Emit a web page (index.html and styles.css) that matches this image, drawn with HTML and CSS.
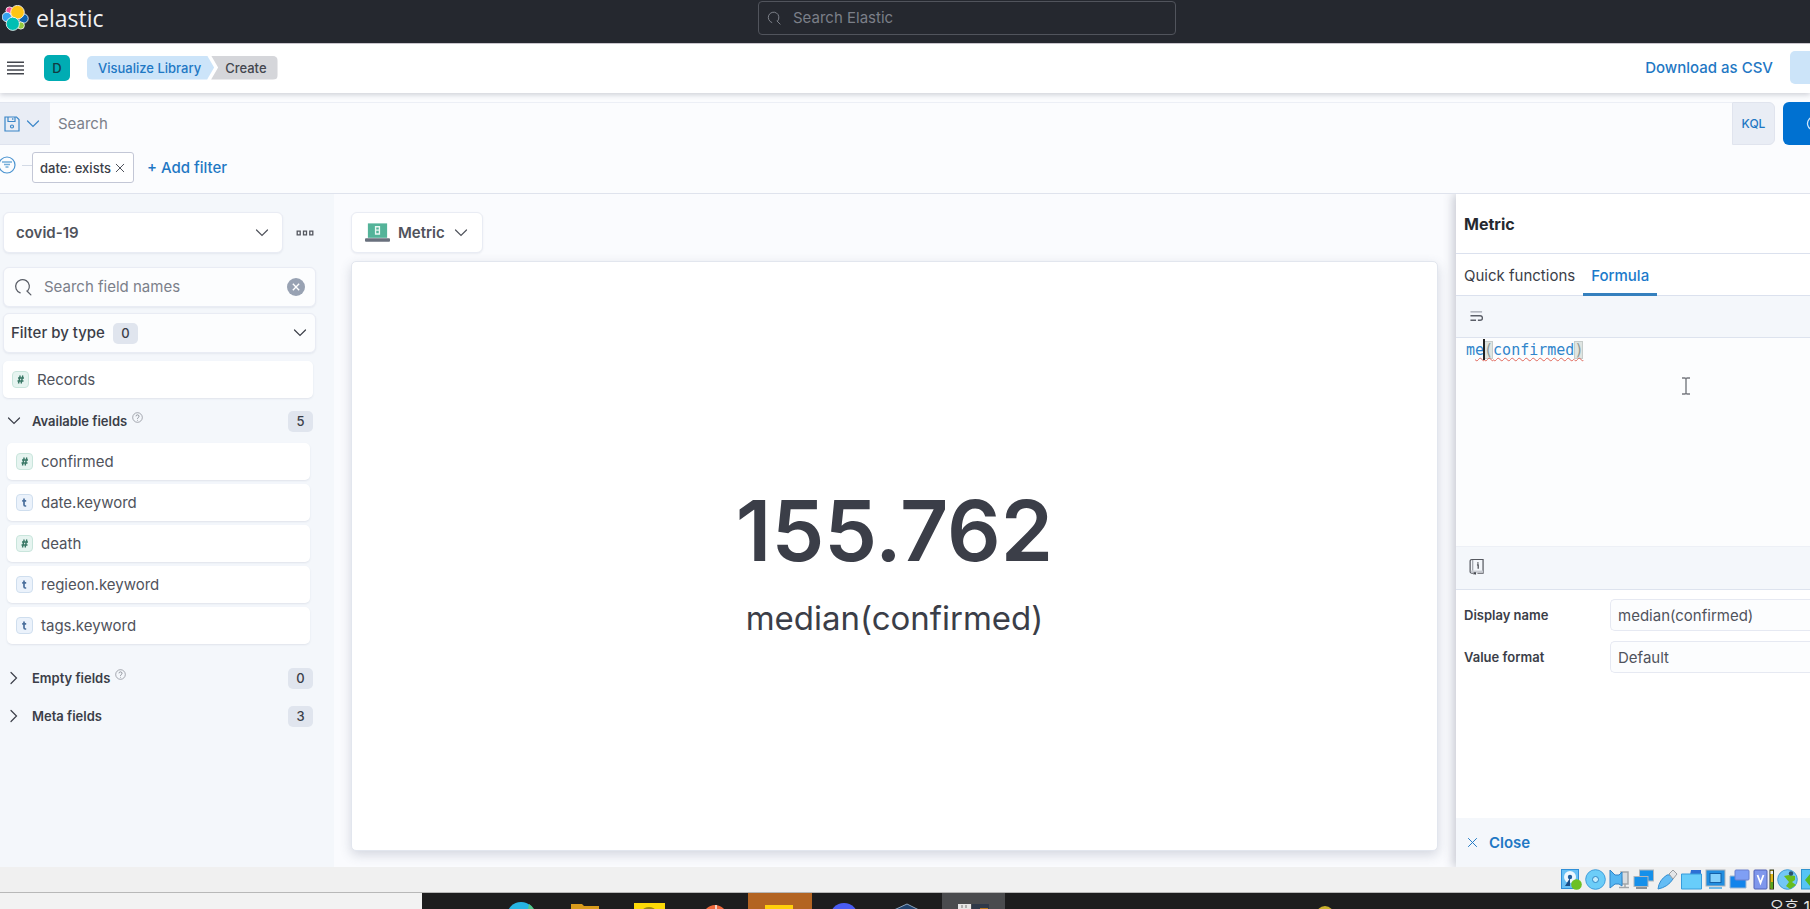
FILE: index.html
```html
<!DOCTYPE html>
<html lang="en">
<head>
<meta charset="utf-8">
<title>Create - Visualize Library - Elastic</title>
<link rel="stylesheet" href="styles.css">
</head>
<body>
<svg width="0" height="0" class="defs" aria-hidden="true">
  <symbol id="chev-down" viewBox="0 0 16 16"><path d="M2.500 5l5.500 5.500L13.500 5" fill="none" stroke="currentColor" stroke-width="1.200" stroke-linecap="round"/></symbol>
  <symbol id="chev-right" viewBox="0 0 16 16"><path d="M5 2.500L10.500 8L5 13.500" fill="none" stroke="currentColor" stroke-width="1.200" stroke-linecap="round"/></symbol>
  <symbol id="search" viewBox="0 0 16 16"><path d="M5.500 13.200A6.100 6.100 0 1 1 12.300 11.300M11.500 11.500L15 15" fill="none" stroke="currentColor" stroke-width="1.100" stroke-linecap="round"/></symbol>
  <symbol id="cross" viewBox="0 0 16 16"><path d="M3 3l10 10M13 3L3 13" fill="none" stroke="currentColor" stroke-width="1.200" stroke-linecap="round"/></symbol>
  <symbol id="help" viewBox="0 0 16 16"><circle cx="8" cy="8" r="7" fill="none" stroke="currentColor"/><path d="M5.800 6.300a2.200 2.200 0 1 1 3.200 2c-.7.400-1 .8-1 1.700M8 11.500v1" fill="none" stroke="currentColor" stroke-width="1.200"/></symbol>
  <symbol id="num" viewBox="0 0 17 17"><rect x=".5" y=".5" width="16" height="16" rx="3.500" fill="#e6f4f0" stroke="#c9e5dc"/><path d="M8.200 4.500L6.500 12.500M10.800 4.500L9.100 12.500M6 7h6M5.500 10h6" stroke="#387765" stroke-width="1.400" fill="none"/></symbol>
  <symbol id="str" viewBox="0 0 17 17"><rect x=".5" y=".5" width="16" height="16" rx="3.500" fill="#ebf2fb" stroke="#cfdeee"/><path d="M8 4.500v6.300q0 1.200 1.200 1.200h1M6.200 6.800h4" stroke="#4a6f9c" stroke-width="1.700" fill="none"/></symbol>
</svg>

<header class="top">
  <a href="#" class="brand">
    <svg class="logo" viewBox="0 0 27 27"><g stroke="#fff" stroke-width=".8"><circle cx="7.500" cy="5.500" r="3.600" fill="#f04e98"/><circle cx="4.800" cy="12" r="4.700" fill="#36a2ef"/><circle cx="21.500" cy="13.500" r="4.700" fill="#0b64b0"/><circle cx="18.800" cy="20.500" r="3.600" fill="#93c83e"/><circle cx="15.500" cy="7.200" r="6.800" fill="#fec514"/><circle cx="10.800" cy="18.800" r="6.600" fill="#00bfb3"/></g></svg>
    <span>elastic</span>
  </a>
  <label class="global-search">
    <svg><use href="#search"/></svg>
    <input type="text" placeholder="Search Elastic" aria-label="Search Elastic">
  </label>
</header>

<nav class="nav">
  <button class="menu" aria-label="Menu"><svg viewBox="0 0 18 14"><path d="M0 1h18M0 5h18M0 9h18M0 13h18" stroke="#43464d" stroke-width="1.600"/></svg></button>
  <button class="space">D</button>
  <div class="crumbs"><a href="#" class="crumb crumb-link">Visualize Library</a><span class="crumb crumb-last">Create</span></div>
  <a href="#" class="download">Download as CSV</a>
  <button class="save" aria-label="Save"></button>
</nav>

<section class="query">
  <div class="query-row">
    <button class="saved" aria-label="Saved queries">
      <svg viewBox="0 0 16 16"><path d="M1 1h11.500L15 3.500V15H1zM4 1v4.500h7V1" fill="none" stroke="currentColor" stroke-width="1.200"/><path d="M8.800 2v2" stroke="currentColor"/><circle cx="8" cy="10.500" r="1.500" fill="none" stroke="currentColor" stroke-width="1.200"/></svg>
      <svg><use href="#chev-down"/></svg>
    </button>
    <input type="text" placeholder="Search" aria-label="Search">
    <button class="kql">KQL</button>
    <button class="refresh" aria-label="Refresh"><svg viewBox="0 0 16 16"><path d="M13.500 4A6.500 6.500 0 1 0 14.500 8" fill="none" stroke="#cfe6fa" stroke-width="1.300"/></svg></button>
  </div>
  <div class="filters">
    <button class="filter-opts" aria-label="Filter options"><svg viewBox="0 0 18 18"><circle cx="9" cy="9" r="8" fill="none" stroke="#4a93d0" stroke-width="1.200"/><path d="M4 6h10M6 8.500h6M7.500 11h3" stroke="#74add9" stroke-width="1.400"/></svg></button>
    <span class="dash"></span>
    <button class="pill">date: exists <svg><use href="#cross"/></svg></button>
    <a href="#" class="add">+ Add filter</a>
  </div>
</section>

<main class="work">
  <aside class="side">
    <div class="source">
      <button class="box dataview">covid-19 <svg><use href="#chev-down"/></svg></button>
      <button class="dots" aria-label="More"><svg viewBox="0 0 18 6"><path d="M1.200 1.200h3v3.600h-3zM7.500 1.200h3v3.600h-3zM13.800 1.200h3v3.600h-3z" fill="none" stroke="#53565e" stroke-width="1.300"/></svg></button>
    </div>
    <label class="box field-search">
      <svg><use href="#search"/></svg>
      <input type="text" placeholder="Search field names" aria-label="Search field names">
      <svg class="clear" viewBox="0 0 17 17"><circle cx="8.500" cy="8.500" r="8.500" fill="#98a2b3"/><path d="M5.500 5.500l6 6M11.500 5.500l-6 6" stroke="#fff" stroke-width="1.300"/></svg>
    </label>
    <button class="box type-filter">Filter by type <span class="badge">0</span><svg><use href="#chev-down"/></svg></button>
    <button class="field records"><svg><use href="#num"/></svg>Records</button>
    <button class="group"><svg><use href="#chev-down"/></svg><span>Available fields</span><svg class="help"><use href="#help"/></svg><span class="badge">5</span></button>
    <div class="fields">
      <button class="field"><svg><use href="#num"/></svg>confirmed</button>
      <button class="field"><svg><use href="#str"/></svg>date.keyword</button>
      <button class="field"><svg><use href="#num"/></svg>death</button>
      <button class="field"><svg><use href="#str"/></svg>regieon.keyword</button>
      <button class="field"><svg><use href="#str"/></svg>tags.keyword</button>
    </div>
    <button class="group"><svg><use href="#chev-right"/></svg><span>Empty fields</span><svg class="help"><use href="#help"/></svg><span class="badge">0</span></button>
    <button class="group"><svg><use href="#chev-right"/></svg><span>Meta fields</span><span class="badge">3</span></button>
  </aside>

  <section class="stage">
    <button class="box chart-type"><svg class="metric-icon" viewBox="0 0 26 20"><rect x="3" y="0" width="20" height="15" fill="#54b399"/><path d="M11 3.500h4v3.500h-4zM11 7h4v4h-4z" fill="none" stroke="#e9f7f2" stroke-width="1.400"/><rect x="0" y="15.500" width="26" height="3.500" rx="1" fill="#69707d"/></svg>Metric<svg><use href="#chev-down"/></svg></button>
    <div class="chart">
      <div class="value">155.762</div>
      <div class="caption">median(confirmed)</div>
    </div>
  </section>

  <aside class="config">
    <h2>Metric</h2>
    <div class="tabs" role="tablist">
      <button role="tab">Quick functions</button>
      <button role="tab" aria-selected="true" class="on">Formula</button>
    </div>
    <div class="tools"><button aria-label="Word wrap"><svg viewBox="0 0 14 12"><path d="M.5 1.500h12.500" stroke="#b4b8c0" stroke-width="1.800"/><path d="M.5 5.800h10.500a2.400 2.400 0 0 1 0 4.800h-2.500M.5 10.600h6" fill="none" stroke="#5b5f68" stroke-width="1.500"/></svg></button></div>
    <div class="editor" role="textbox" aria-label="Formula">m<span class="squiggle">e<i class="caret"></i><span class="paren">(</span>confirmed<span class="paren">)</span></span>
      <svg class="pointer" viewBox="0 0 8 18"><path d="M0 1h3l1 1 1-1h3M4 2v14M0 17h3l1-1 1 1h3" fill="none" stroke="#777a80" stroke-width="1.400"/></svg>
    </div>
    <div class="tools tools-doc"><button aria-label="Reference"><svg viewBox="0 0 16 18"><path d="M3 1h12v14.500H9M5 15.500H3a1.800 1.800 0 0 1-1.800-1.800V2.800A1.800 1.800 0 0 1 3 1" fill="none" stroke="#55585f" stroke-width="1.300"/><path d="M4 1.500v11.500" stroke="#858991"/><path d="M2 12.800h13v2.400H2z" fill="#c9ccd2"/><path d="M5 14.500v3l1.300-1 1.200 1v-3z" fill="#45484f"/><path d="M9.500 4v1.500M8.500 6.800h1.300v4" fill="none" stroke="#45484f" stroke-width="1.300"/></svg></button></div>
    <form class="form">
      <label for="dn">Display name</label><input id="dn" type="text" value="median(confirmed)">
      <label for="vf">Value format</label><input id="vf" type="text" value="Default">
    </form>
    <footer><button class="close"><svg><use href="#cross"/></svg>Close</button></footer>
  </aside>
</main>

<div class="vm-bar">
  <svg viewBox="0 0 21 21"><rect x=".5" y=".5" width="17" height="19" fill="#67c0f5" stroke="#2f8fd8"/><circle cx="9" cy="8" r="6" fill="#eef7fd"/><circle cx="9" cy="8" r="2.200" fill="#1f5e9c"/><path d="M9 9L4 17h5z" fill="#1c4f88"/><circle cx="15.500" cy="15.500" r="5.300" fill="#6cc024"/></svg>
  <svg viewBox="0 0 21 21"><circle cx="10.500" cy="10.500" r="9.800" fill="#6ccdf8" stroke="#3e9ddb"/><circle cx="10.500" cy="10.500" r="3" fill="#c4ecfc" stroke="#2f86c6"/></svg>
  <svg viewBox="0 0 21 21"><path d="M12 3h7v12h-6zM10 18.500h10M16 15v4" fill="#d9dcdf" stroke="#a2a6aa" stroke-width="1.500"/><path d="M1 1l5 5h4l3-3v14l-3-2H6l-5 4z" fill="#55b6f2" stroke="#2f83c8"/></svg>
  <svg viewBox="0 0 21 21"><rect x="6.500" y="1" width="14" height="11" fill="#1590ea" stroke="#b0b6bb"/><rect x="1" y="7.500" width="14" height="10" fill="#1590ea" stroke="#b0b6bb"/><path d="M3 19h11" stroke="#8b9298" stroke-width="2"/></svg>
  <svg viewBox="0 0 21 21"><path d="M1 20q1-9 9-14q5-1 6 4q-5 8-15 10z" fill="#65bdf5" stroke="#348ed0"/><path d="M12 5l4-4 4 4-4 5z" fill="#e4e6e8" stroke="#999da1"/></svg>
  <svg viewBox="0 0 21 21"><path d="M10 1h10v5H9z" fill="#2d6fd4"/><path d="M.5 5h20v15H.5z" fill="#68cdfa" stroke="#369cdc"/></svg>
  <svg viewBox="0 0 21 21"><rect x="1" y="1" width="19" height="16" fill="#218ddf" stroke="#adb4bb"/><rect x="5" y="4.500" width="11" height="9" fill="#83d0fb" stroke="#1360a8"/><path d="M4 19h13" stroke="#6fb9e8" stroke-width="2"/></svg>
  <svg viewBox="0 0 21 21"><path d="M1 7h16v12H1z" fill="#1284eb" stroke="#9db7d2"/><rect x="6" y="1" width="14" height="10" rx="1" fill="#7f9ff4" stroke="#6b80cf"/></svg>
  <svg viewBox="0 0 21 21"><rect x="1" y="1" width="13" height="19" rx="1" fill="#7f97ec" stroke="#5262b6"/><path d="M4.500 6L7.500 14L10.500 6" fill="none" stroke="#fff" stroke-width="1.800"/><rect x="17" y="1" width="3.500" height="19" fill="#e3b616" stroke="#29351c"/><rect x="17.500" y="13" width="2.500" height="6.500" fill="#56a51f"/><rect x="17.500" y="2" width="2.500" height="3" fill="#eee"/></svg>
  <svg viewBox="0 0 21 21"><circle cx="10.500" cy="10.500" r="9.800" fill="#72c7f5" stroke="#3f9ad5"/><path d="M7 7l5-1 6 1v4l-3 2 4 3-6 4-4-3 3-4z" fill="#68bd1d"/><circle cx="14" cy="4.500" r="2.200" fill="#2a506b"/></svg>
  <svg viewBox="0 0 21 21"><rect x=".5" y=".5" width="22" height="19.500" fill="#55c4f5" stroke="#2f93cf"/><path d="M4 11l5-6v3h12v6H9v3z" fill="#56bb29"/></svg>
</div>

<div class="taskbar">
  <div class="task-search"></div>
  <svg class="task-icons" viewBox="422 0 912 16" preserveAspectRatio="xMinYMin slice">
    <circle cx="521" cy="23" r="14" fill="#27b4e3"/><path d="M529 11a14 14 0 0 1 5 5h-6z" fill="#51c98c"/>
    <path d="M571 11h11l2 2h15v4h-28z" fill="#d89a1c"/>
    <rect x="634" y="10" width="31" height="10" fill="#fcd908"/><ellipse cx="649" cy="17" rx="6" ry="3" fill="#9c8614"/>
    <circle cx="715" cy="24" r="12" fill="#f0693c"/><rect x="715" y="12" width="2" height="4" fill="#f6d0c0"/>
    <rect x="748" width="64" height="16" fill="#b36422"/><rect x="765" y="12" width="28" height="4" fill="#ffcf0b"/>
    <circle cx="844" cy="24" r="14" fill="#4a5cf4"/>
    <path d="M894 17l13-6 12 6z" fill="#21436e" stroke="#8da5bf"/>
    <rect x="942" width="63" height="16" fill="#4a4b4e"/><rect x="958" y="11" width="13" height="5" fill="#e5e5e5"/><path d="M962 12v3M966 12v3" stroke="#777"/><rect x="972" y="11" width="17" height="5" fill="#2f3949"/><rect x="980" y="15" width="8" height="1" fill="#b9771e"/>
    <circle cx="1325" cy="22" r="9" fill="#c9b02c"/>
  </svg>
  <div class="clock">오후 1</div>
</div>
</body>
</html>
```
FILE: styles.css
```css
* { box-sizing: border-box; }
body {
  margin: 0;
  height: 100vh;
  display: flex;
  flex-direction: column;
  overflow: hidden;
  background: #fafbfd;
  color: #3b3e48;
  font: 15px/20px Inter, "Liberation Sans", sans-serif;
}
button, input { font: inherit; color: inherit; border: 0; background: none; padding: 0; margin: 0; }
input { min-width: 0; outline: 0; }
input::placeholder { color: #7b808a; opacity: 1; }
a { color: #1f78c4; text-decoration: none; }
svg { width: 16px; height: 16px; flex: none; display: block; }
.defs { position: absolute; width: 0; height: 0; }

.top {
  flex: none;
  height: 43px;
  display: grid;
  grid-template-columns: 758fr 418px 634fr;
  padding: 1px 0 8px;
  background: #25282f;
}
.brand { display: flex; align-items: center; gap: 7px; padding: 0 0 0 2px; color: #f1f2f4; font: 23px/28px "Open Sans", "Noto Sans", sans-serif; }
.brand span { padding-bottom: 1px; }
.logo { width: 27px; height: 27px; }
.global-search { display: flex; align-items: center; gap: 12px; padding: 0 8px; height: 34px; border: 1px solid #51545c; border-radius: 4px; color: #80848d; }
.global-search svg { width: 14px; height: 14px; }
.global-search input { flex: 1; }
.global-search input::placeholder { color: #7b7f88; }

.nav {
  flex: none;
  position: relative;
  height: 50px;
  display: flex;
  align-items: center;
  padding: 0 0 2px 7px;
  background: #fff;
  border-top: 1px solid #c9c5cc;
  box-shadow: 0 2px 5px rgba(60, 66, 87, .22);
}
.menu svg { width: 17px; height: 14px; }
.space { width: 26px; height: 26px; margin-left: 20px; border-radius: 5px; background: #00acb3; color: #113b42; font-size: 13px; font-weight: 500; }
.crumbs { display: flex; margin-left: 17px; font-size: 13px; font-weight: 500; line-height: 24px; }
.crumb { height: 24px; }
.crumb-link { padding: 0 13px 0 11px; background: #cce4f9; border-radius: 5px 0 0 5px; clip-path: polygon(0 0, calc(100% - 7px) 0, 100% 50%, calc(100% - 7px) 100%, 0 100%); }
.crumb-last { margin-left: -3px; padding: 0 11px 0 14px; background: #d5d6da; border-radius: 0 5px 5px 0; color: #43464e; clip-path: polygon(0 0, 100% 0, 100% 100%, 0 100%, 7px 50%); }
.download { margin-left: auto; font-weight: 500; }
.save { width: 20px; height: 33px; margin-left: 17px; background: #cce4f9; border-radius: 5px 0 0 5px; }

.query { flex: none; padding-top: 9px; height: 101px; border-bottom: 1px solid #dfe3ed; background: #fbfcfe; }
.query-row { display: flex; height: 43px; }
.query-row input { flex: 1; padding-left: 8px; border-top: 1px solid #eceff6; }
.saved { width: 50px; display: flex; align-items: center; gap: 5px; padding-left: 4px; background: #e9edf5; color: #3a86c8; border-top: 1px solid #e2e6f0; border-bottom: 1px solid #dfe3ee; }
.kql { width: 43px; background: #e9edf5; border: 1px solid #e0e4ee; border-radius: 0 6px 6px 0; color: #1f78c4; font-size: 12px; font-weight: 500; }
.refresh { width: 27px; margin-left: 8px; padding-left: 23px; overflow: hidden; background: #0071d1; border-radius: 6px 0 0 6px; }
.filters { display: flex; align-items: center; margin-top: 7px; height: 31px; }
.filter-opts { margin-left: -2px; padding-bottom: 5px; }
.filter-opts svg { width: 18px; height: 18px; }
.dash { width: 10px; margin-left: 6px; margin-bottom: 4px; border-top: 1px solid #d3dae6; }
.pill { display: flex; align-items: center; gap: 3px; height: 31px; padding: 0 7px; background: #fff; border: 1px solid #c3c7d6; border-radius: 3px; font-size: 13px; font-weight: 500; }
.pill svg { width: 12px; height: 12px; }
.add { margin-left: 13px; font-weight: 500; }

.work { flex: 1; min-height: 0; display: flex; overflow: hidden; }
.box { display: flex; align-items: center; background: #fcfdfe; border: 1px solid #e9ecf4; border-radius: 6px; box-shadow: 0 1px 2px rgba(100, 110, 140, .1); text-align: left; }
.badge { min-width: 25px; height: 21px; padding: 0 8px; border-radius: 5px; background: #e0e5ee; font-size: 13px; font-weight: 500; line-height: 21px; text-align: center; }

.side { flex: none; width: 334px; padding: 18px 18px 0 3px; background: #f4f7fb; display: flex; flex-direction: column; }
.source { display: flex; align-items: center; gap: 13px; }
.dataview { width: 280px; height: 41px; padding: 0 12px; justify-content: space-between; background: #fff; font-weight: 600; color: #50535c; }
.dots svg { width: 18px; height: 6px; }
.field-search { height: 40px; margin-top: 14px; padding: 0 10px; color: #5a5e67; gap: 12px; }
.field-search svg { width: 18px; height: 18px; }
.field-search input { flex: 1; }
.type-filter { height: 40px; margin-top: 6px; padding: 0 7px; font-weight: 500; }
.type-filter .badge { margin-left: 8px; }
.type-filter > svg { margin-left: auto; }
.field { display: flex; align-items: center; gap: 8px; width: 100%; height: 37px; padding: 0 9px; background: #fff; border-radius: 5px; box-shadow: 0 1px 2px rgba(100, 110, 140, .14); color: #50535c; text-align: left; }
.field svg { width: 17px; height: 17px; }
.records { margin-top: 8px; width: 310px; }
.group { display: flex; align-items: center; height: 38px; padding: 0 3px; font-size: 13px; font-weight: 600; }
.group > span:nth-child(2) { margin-left: 10px; }
.group .help { width: 11px; height: 11px; margin: 0 0 7px 5px; color: #80848d; }
.group .badge { margin-left: auto; }
.records + .group { margin-top: 4px; }
.fields { display: flex; flex-direction: column; gap: 4px; padding: 3px 6px 15px 4px; }

.stage { flex: 1; min-width: 0; display: flex; flex-direction: column; padding: 18px 18px 16px 17px; background: #fafbfe; }
.chart-type { align-self: flex-start; height: 41px; padding: 0 13px; font-weight: 600; color: #50535c; background: #fff; gap: 8px; }
.metric-icon { width: 25px; height: 20px; }
.chart { flex: 1; margin-top: 8px; padding-top: 7px; background: #fff; border: 1px solid #e2e6ee; border-radius: 5px; box-shadow: 0 4px 12px rgba(60, 70, 100, .2); display: flex; flex-direction: column; align-items: center; justify-content: center; }
.value { font-size: 84px; line-height: 100px; font-weight: 600; }
.caption { margin-top: 17px; font-size: 33px; line-height: 40px; }

.config { position: relative; flex: none; width: 354px; display: flex; flex-direction: column; overflow: hidden; background: #fff; box-shadow: -3px 0 9px rgba(60, 66, 87, .25); }
.config h2 { margin: 0; height: 60px; padding-left: 8px; border-bottom: 1px solid #dbe1ee; font-size: 16px; font-weight: 700; line-height: 60px; color: #25282f; }
.tabs { display: flex; height: 42px; border-bottom: 1px solid #dbe1ee; }
.tabs button { padding: 2px 8px 0; height: 42px; }
.tabs .on { color: #1b7acb; border-bottom: 3px solid #3580be; padding-top: 5px; font-weight: 500; }
.tools { display: flex; align-items: center; height: 42px; padding: 0 14px 2px; background: #f4f7fb; border-bottom: 1px solid #dde3ee; }
.tools svg { width: 13px; height: 12px; }
.editor { position: relative; height: 208px; padding: 1px 0 0 10px; background: #fcfdfe; font: 15px/22px "DejaVu Sans Mono", "Liberation Mono", monospace; color: #3085cb; }
.squiggle { position: relative; text-decoration: underline wavy #e0685c 1px; text-underline-offset: 2px; }
.paren { background: #dfe5e2; color: #8f9a98; box-shadow: inset 0 0 0 1px #c6ccca; }
.caret { position: absolute; left: 8px; top: -2px; width: 2px; height: 21px; background: #222; }
.pointer { position: absolute; left: 226px; top: 39px; width: 8px; height: 18px; }
.tools-doc { height: 44px; padding: 0 13px 2px; border-top: 1px solid #edf0f6; }
.tools-doc svg { width: 15px; height: 18px; }
.form { display: grid; grid-template-columns: 146px 1fr; row-gap: 10px; align-items: center; padding: 9px 0 0 8px; }
.form label { font-size: 13px; font-weight: 600; }
.form input { height: 32px; padding-left: 7px; border: 1px solid #e6e9f2; border-right: 0; border-radius: 5px 0 0 5px; background: #fcfdfe; color: #50535c; }
.config footer { margin-top: auto; height: 49px; padding-left: 10px; display: flex; background: #f4f7fb; }
.close { display: flex; align-items: center; gap: 10px; color: #1f78c4; font-weight: 600; }
.close svg { width: 13px; height: 13px; }

.vm-bar { position: relative; flex: none; height: 26px; display: flex; justify-content: flex-end; align-items: center; gap: 3px; overflow: hidden; background: #f0f0f0; border-bottom: 1px solid #b8b8b8; }
.vm-bar svg { width: 21px; height: 21px; }
.vm-bar svg:last-child { margin-right: -12px; }
.taskbar { flex: none; height: 16px; display: flex; overflow: hidden; background: #1d1d1e; }
.task-search { width: 422px; background: #f2f2f2; }
.task-icons { width: 912px; height: 16px; }
.clock { margin-left: auto; padding: 4px 0 0; color: #e4e4e4; font: 16px/20px Inter, "Noto Sans CJK KR", sans-serif; white-space: nowrap; }
```
